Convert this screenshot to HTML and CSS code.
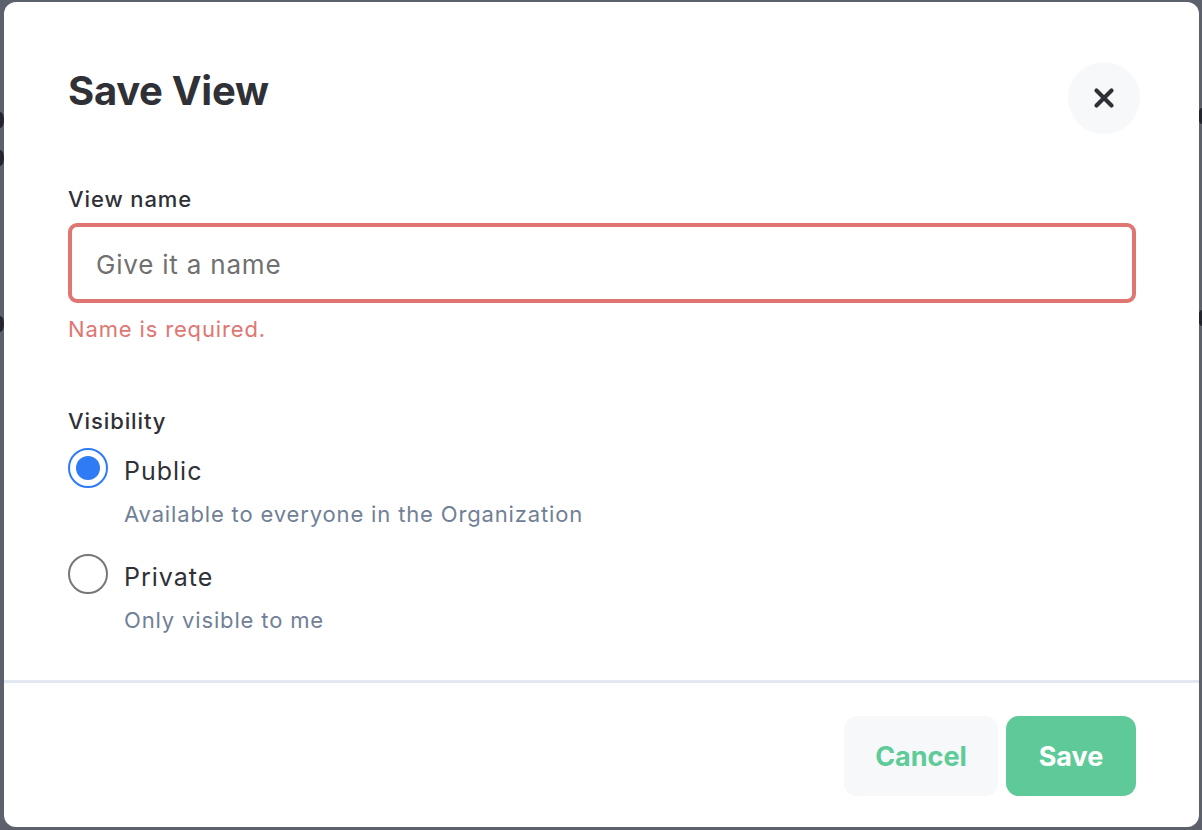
FILE: index.html
```html
<!DOCTYPE html>
<html lang="en">
<head>
<meta charset="utf-8">
<title>Save View</title>
<link rel="stylesheet" href="styles.css">
</head>
<body>
<div class="backdrop">
  <div class="page-ghost">
    <span class="ghost g1"></span>
    <span class="ghost g2"></span>
    <span class="ghost g3"></span>
    <span class="ghost g4"></span>
    <span class="ghost g5"></span>
  </div>
  <section class="modal" role="dialog" aria-labelledby="title">
    <header class="modal-header">
      <h1 id="title" class="modal-title">Save View</h1>
      <button class="close-btn" aria-label="Close">
        <svg width="22" height="22" viewBox="0 0 22 22" aria-hidden="true">
          <path d="M3.5 3.5 L18.5 18.5 M18.5 3.5 L3.5 18.5" stroke="#2f3137" stroke-width="4.2" stroke-linecap="round" fill="none"/>
        </svg>
      </button>
    </header>
    <div class="modal-body">
      <div class="field">
        <label class="field-label" for="name">View name</label>
        <input id="name" class="text-input invalid" type="text" placeholder="Give it a name">
        <p class="error-text">Name is required.</p>
      </div>
      <div class="field visibility">
        <div class="field-label">Visibility</div>
        <label class="radio-option">
          <span class="radio checked"><span class="dot"></span></span>
          <span class="radio-text">
            <span class="radio-title">Public</span>
            <span class="radio-desc">Available to everyone in the Organization</span>
          </span>
        </label>
        <label class="radio-option">
          <span class="radio"></span>
          <span class="radio-text">
            <span class="radio-title">Private</span>
            <span class="radio-desc">Only visible to me</span>
          </span>
        </label>
      </div>
    </div>
    <footer class="modal-footer">
      <button class="btn btn-ghost">Cancel</button>
      <button class="btn btn-primary">Save</button>
    </footer>
  </section>
</div>
</body>
</html>
```

FILE: styles.css
```css
* { box-sizing: border-box; }

html, body {
  margin: 0;
  padding: 0;
  height: 100%;
}

body {
  font-family: Inter, "Noto Sans", "Liberation Sans", sans-serif;
  color: #2f3137;
  background: #5d616c;
  overflow: hidden;
}

.backdrop {
  position: relative;
  width: 1202px;
  height: 830px;
  padding: 2px 3px 3px 4px;
  background: #5d616c;
}

.page-ghost { position: absolute; inset: 0; }
.ghost {
  position: absolute;
  width: 8px;
  height: 16px;
  border-radius: 50%;
  background: #23262e;
}
.g1 { left: -4px; top: 112px; }
.g2 { left: -4px; top: 150px; }
.g3 { left: -4px; top: 316px; }
.g4 { right: -4px; top: 108px; }
.g5 { right: -4px; top: 310px; }

.modal {
  position: relative;
  height: 825px;
  background: #ffffff;
  border-radius: 12px;
  display: flex;
  flex-direction: column;
}

.modal-header {
  display: flex;
  justify-content: space-between;
  align-items: flex-start;
  padding: 64px 59px 0 64px;
}

.modal-title {
  margin: 0;
  font-size: 40px;
  line-height: 50px;
  font-weight: 700;
  letter-spacing: -0.3px;
}

.close-btn {
  width: 72px;
  height: 72px;
  margin-top: -4px;
  border: none;
  border-radius: 50%;
  background: #f7f8fa;
  display: flex;
  align-items: center;
  justify-content: center;
  padding: 0;
}

.modal-body {
  flex: 1;
  padding: 50px 63px 0 64px;
}

.field-label {
  display: block;
  font-size: 22px;
  line-height: 30px;
  font-weight: 500;
  letter-spacing: 0.9px;
  color: #2f3137;
}

.text-input {
  display: block;
  width: 100%;
  height: 80px;
  margin-top: 9px;
  padding: 3px 24px 0;
  font-family: inherit;
  font-size: 26px;
  letter-spacing: 0.8px;
  color: #2f3137;
  border: 4px solid #e07672;
  border-radius: 9px;
  outline: none;
  background: #fff;
}
.text-input::placeholder { color: #707070; }

.error-text {
  margin: 11px 0 0;
  font-size: 22px;
  line-height: 30px;
  letter-spacing: 0.85px;
  color: #e07672;
}

.visibility { margin-top: 62px; }

.radio-option {
  display: flex;
  align-items: flex-start;
  gap: 16px;
  margin-top: 12px;
}
.radio-option + .radio-option { margin-top: 25px; }

.radio {
  flex: none;
  width: 40px;
  height: 40px;
  border-radius: 50%;
  border: 2px solid #777777;
  display: flex;
  align-items: center;
  justify-content: center;
}
.radio.checked { border-color: #2f7bf5; }
.radio .dot {
  width: 24px;
  height: 24px;
  border-radius: 50%;
  background: #2f7bf5;
}

.radio-text {
  display: flex;
  flex-direction: column;
}
.radio-title {
  font-size: 25px;
  line-height: 46px;
  letter-spacing: 1px;
  color: #2f3137;
}
.radio-desc {
  margin-top: 5px;
  font-size: 22px;
  line-height: 30px;
  letter-spacing: 0.85px;
  color: #718096;
}

.modal-footer {
  display: flex;
  justify-content: flex-end;
  gap: 8px;
  border-top: 3px solid #e2e8f0;
  padding: 33px 63px 31px 64px;
}

.btn {
  height: 80px;
  border: none;
  border-radius: 13px;
  font-family: inherit;
  font-size: 27px;
  font-weight: 700;
  padding: 0;
}
.btn-ghost {
  width: 154px;
  background: #f7f8fa;
  color: #5ecb98;
}
.btn-primary {
  width: 130px;
  background: #5fca99;
  color: #ffffff;
}
```
